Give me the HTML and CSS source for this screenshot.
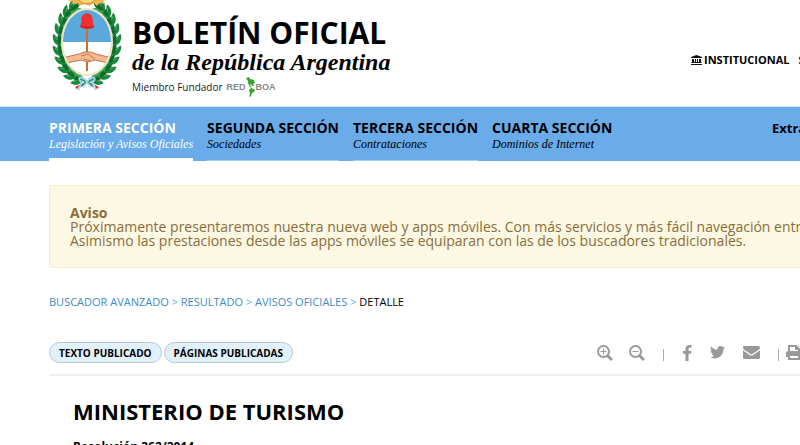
FILE: index.html
```
<!DOCTYPE html>
<html lang="es">
<head>
    <meta charset="UTF-8">
    <meta name="viewport" content="width=device-width, initial-scale=1.0">
    <title>Boletín Oficial de la República Argentina</title>
    <link rel="stylesheet" href="styles.css">
</head>
<body>
    <header class="header">
        <a href="#" class="brand">
            <svg class="escudo" viewBox="0 0 76 96" role="img" aria-label="Escudo Nacional">
                <defs>
                    <g id="hojas">
                        <path d="M0 4C-7 2-8-3-7-8C-3-6 0-2 0 4Z" fill="#16873b"/>
                        <path d="M0 4C6 2 7-3 6-8C2-6 0-2 0 4Z" fill="#38a44c"/>
                        <path d="M0 3C-4-2-3-6 0-10C3-6 3-2 0 3Z" fill="#0e6a2e"/>
                        <path d="M-2-2L-5-5M2-2L4-5" stroke="#4fae5c" stroke-width="1"/>
                    </g>
                    <g id="rama">
                        <use href="#hojas" transform="translate(-8 37) rotate(-71)"/>
                        <use href="#hojas" transform="translate(-15 33) rotate(-53)"/>
                        <use href="#hojas" transform="translate(-21 27) rotate(-38)"/>
                        <use href="#hojas" transform="translate(-25 19) rotate(-24)"/>
                        <use href="#hojas" transform="translate(-28 10) rotate(-12)"/>
                        <use href="#hojas" transform="translate(-29 0)"/>
                        <use href="#hojas" transform="translate(-28 -10) rotate(12)"/>
                        <use href="#hojas" transform="translate(-25 -19) rotate(24)"/>
                        <use href="#hojas" transform="translate(-21 -27) rotate(38)"/>
                        <use href="#hojas" transform="translate(-15 -33) rotate(53)"/>
                        <path d="M-4 38L9 45" stroke="#16873b" stroke-width="2"/>
                        <path d="M8 44L12 46" stroke="#e02a24" stroke-width="2"/>
                    </g>
                    <clipPath id="ovalo"><ellipse cx="38" cy="42" rx="24" ry="32"/></clipPath>
                </defs>
                <g transform="translate(38 42)">
                    <use href="#rama" transform="scale(.94 1)"/>
                    <use href="#rama" transform="scale(-.94 1)"/>
                </g>
                <path d="M18 0L24 2L22 4L29 3L30 6L36 4L40 6L45 3L48 6L50 3L57 4L53 1L58 0Z" fill="#f3b74f"/>
                <path d="M30 0C32 5 44 5 46 0" fill="#fbd37c" stroke="#c98a2c"/>
                <ellipse cx="38" cy="42" rx="25" ry="33" fill="#fff" stroke="#f0e2c4" stroke-width="2"/>
                <g clip-path="url(#ovalo)">
                    <path d="M13 8H63V42H13Z" fill="#5ba8dc"/>
                    <path d="M38 26V71" stroke="#c9702f" stroke-width="2"/>
                    <path d="M13 58L30 54L35 52L42 52L47 54L63 58V64L46 60L39 62L32 60L13 64Z" fill="#f3b990" stroke="#bd7850"/>
                    <path d="M32 56L39 54L46 59M35 59L41 61" stroke="#bd7850" fill="none"/>
                </g>
                <path d="M31 27C32 23 33 22 32 18C34 13 39 12 42 15C45 19 43 22 45 28C40 30 34 29 31 27Z" fill="#ef2f2d"/>
                <path d="M32 26C37 28 41 28 45 26" stroke="#b81d22" fill="none"/>
                <path d="M38 82C32 73 27 80 33 82L29 90M38 82C44 73 49 80 43 82L47 90M38 82L34 87M38 82L42 87" stroke="#a4d3f0" stroke-width="2" fill="none"/>
            </svg>
            <span class="brand-text">
                <span class="brand-title">BOLETÍN OFICIAL</span>
                <span class="brand-subtitle">de la República Argentina</span>
                <span class="brand-member">
                    Miembro Fundador
                    <span class="redboa">
                        <b>RED</b>
                        <svg class="america" viewBox="0 0 10 20" aria-hidden="true">
                            <path d="M0 1L3 0L4 2L8 3L9 6L7 7L8 9L6 9L5 7L4 8L6 11L4 10L2 6L2 4Z" fill="#35a52c"/>
                            <path d="M5 11L8 12L9 14L6 16L5 19L3 20L4 17L3 13Z" fill="#35a52c"/>
                        </svg>
                        <b>BOA</b>
                    </span>
                </span>
            </span>
        </a>
        <nav class="top-links">
            <a href="#">
                <svg class="icon-bank" viewBox="0 0 11 10" aria-hidden="true">
                    <path d="M5.500 0L11 2V3H0V2ZM1 4H3V7H4V4H5V7H6V4H7V7H8V4H10V7H10.500V8H.5V7H1ZM0 9H11V10H0Z" fill="#111"/>
                </svg>
                INSTITUCIONAL
            </a>
            <a href="#">SUSCRIPCIONES</a>
        </nav>
    </header>

    <nav class="sections">
        <a href="#" class="section active">
            <span class="section-title">PRIMERA SECCIÓN</span>
            <span class="section-desc">Legislación y Avisos Oficiales</span>
        </a>
        <a href="#" class="section">
            <span class="section-title">SEGUNDA SECCIÓN</span>
            <span class="section-desc">Sociedades</span>
        </a>
        <a href="#" class="section">
            <span class="section-title">TERCERA SECCIÓN</span>
            <span class="section-desc">Contrataciones</span>
        </a>
        <a href="#" class="section last">
            <span class="section-title">CUARTA SECCIÓN</span>
            <span class="section-desc">Dominios de Internet</span>
        </a>
        <a href="#" class="extra">Extra</a>
    </nav>

    <main class="content">
        <div class="alert">
            <strong>Aviso</strong>
            <p>Próximamente presentaremos nuestra nueva web y apps móviles. Con más servicios y más fácil navegación entre</p>
            <p>Asimismo las prestaciones desde las apps móviles se equiparan con las de los buscadores tradicionales.</p>
        </div>

        <div class="breadcrumb">
            <a href="#">BUSCADOR AVANZADO</a> <i>&gt;</i>
            <a href="#">RESULTADO</a> <i>&gt;</i>
            <a href="#">AVISOS OFICIALES</a> <i>&gt;</i>
            <span>DETALLE</span>
        </div>

        <div class="toolbar">
            <div class="views">
                <button type="button">TEXTO PUBLICADO</button>
                <button type="button">PÁGINAS PUBLICADAS</button>
            </div>
            <div class="tools">
                <div class="zoom">
                    <button type="button" aria-label="Agrandar texto">
                        <svg width="16" height="16" viewBox="0 0 16 16">
                            <circle cx="6.500" cy="6.500" r="5.500" fill="none" stroke="#999" stroke-width="2"/>
                            <path d="M10.500 10.500L15 15" stroke="#999" stroke-width="3"/>
                            <path d="M3.500 6.500H9.500M6.500 3.500V9.500" stroke="#999"/>
                        </svg>
                    </button>
                    <button type="button" aria-label="Achicar texto">
                        <svg width="16" height="16" viewBox="0 0 16 16">
                            <circle cx="6.500" cy="6.500" r="5.500" fill="none" stroke="#999" stroke-width="2"/>
                            <path d="M10.500 10.500L15 15" stroke="#999" stroke-width="3"/>
                            <path d="M3.500 6.500H9.500" stroke="#999"/>
                        </svg>
                    </button>
                </div>
                <span class="divider"></span>
                <button type="button" aria-label="Facebook">
                    <svg width="10" height="16" viewBox="0 0 9 16">
                        <path d="M9 .1V2.700H7.400C6.200 2.700 6 3.300 6 4.100V5.900H8.800L8.400 8.700H6V16H3V8.700H.5V5.900H3V3.800C3 1.400 4.500 0 6.700 0C7.800 0 8.700.1 9 .1Z" fill="#999"/>
                    </svg>
                </button>
                <button type="button" aria-label="Twitter">
                    <svg width="15" height="13" viewBox="0 0 15 13">
                        <path d="M15 1.500C14.600 2.100 14.100 2.700 13.500 3.100C13.700 8 10 12.500 4.700 12.500C3 12.500 1.400 12 0 11.100C1.600 11.300 3.200 10.800 4.500 9.800C3.200 9.800 2.100 8.900 1.700 7.700C2.100 7.800 2.600 7.800 3.100 7.600C1.600 7.300.6 6 .6 4.500C1 4.800 1.500 4.900 2 4.900C.6 3.900.2 2.100 1.100.6C2.600 2.500 4.900 3.700 7.400 3.800C6.900 1.800 8.400 0 10.400 0C11.300 0 12.100.4 12.600 1C13.300.8 14 .6 14.600.2C14.400.9 13.900 1.500 13.300 1.900C13.900 1.800 14.500 1.700 15 1.500Z" fill="#999"/>
                    </svg>
                </button>
                <button type="button" aria-label="Correo">
                    <svg width="17" height="13" viewBox="0 0 17 13">
                        <path d="M1.500 0H15.500C16.400 0 17 .6 17 1.500C17 2.500 16.200 3.500 15.400 4L10.200 7.600C9.600 8 9 8.400 8.500 8.400C8 8.400 7.400 8 6.800 7.600L1.600 4C.9 3.600 0 2.500 0 1.600C0 .7.6 0 1.500 0ZM0 4.200C1.500 5.500 4 7 6.300 8.700C7 9.200 7.700 9.600 8.500 9.600C9.300 9.600 10 9.200 10.700 8.700C13 7 15.500 5.500 17 4.200V11.500C17 12.400 16.400 13 15.500 13H1.500C.6 13 0 12.400 0 11.500Z" fill="#999"/>
                    </svg>
                </button>
                <div class="print">
                    <span class="divider"></span>
                    <button type="button" aria-label="Imprimir">
                        <svg width="16" height="15" viewBox="0 0 16 15">
                            <path d="M3 7V1H10L13 4V7M10 1V4H13" fill="none" stroke="#999" stroke-width="2"/>
                            <path d="M2 6H14C15 6 16 7 16 8V12H13V10H3V12H0V8C0 7 1 6 2 6Z" fill="#999"/>
                            <path d="M3 10H13V14H3Z" fill="#fff" stroke="#999" stroke-width="2"/>
                        </svg>
                    </button>
                </div>
            </div>
        </div>

        <article class="notice">
            <h1>MINISTERIO DE TURISMO</h1>
            <h2>Resolución 362/2014</h2>
        </article>
    </main>
</body>
</html>
```
FILE: styles.css
```
* {
    box-sizing: border-box;
}

body {
    margin: 0;
    font-family: 'Open Sans', sans-serif;
    color: #000;
    background-color: #fff;
    overflow: hidden;
}

a {
    color: inherit;
    text-decoration: none;
}

.header {
    display: flex;
    justify-content: space-between;
    height: 107px;
    padding-left: 49px;
    border-bottom: 1px solid #d9e8f5;
    overflow: hidden;
    white-space: nowrap;
}

.brand {
    display: flex;
    gap: 7px;
}

.escudo {
    width: 76px;
    height: 96px;
}

.brand-text {
    display: flex;
    flex-direction: column;
    padding-top: 13px;
}

.brand-title {
    font-size: 30px;
    font-weight: 700;
    line-height: 39px;
}

.brand-subtitle {
    font-family: 'Liberation Serif', serif;
    font-size: 24px;
    font-style: italic;
    font-weight: 700;
    line-height: 20px;
}

.brand-member {
    display: flex;
    align-items: center;
    gap: 4px;
    padding-top: 5px;
    font-size: 10px;
    line-height: 20px;
    color: #222;
}

.redboa {
    display: flex;
    align-items: center;
    font-family: 'Liberation Sans', sans-serif;
    font-size: 9px;
    color: #888;
}

.america {
    width: 10px;
    height: 20px;
}

.top-links {
    display: flex;
    align-items: flex-start;
    gap: 9px;
    width: 109px;
    padding-top: 52px;
    font-size: 11px;
    font-weight: 700;
    line-height: 16px;
}

.top-links a {
    display: flex;
    align-items: center;
    gap: 2px;
}

.icon-bank {
    width: 11px;
    height: 10px;
}

.sections {
    display: flex;
    gap: 14px;
    height: 54px;
    padding-left: 49px;
    background-color: #6aabea;
    overflow: hidden;
    white-space: nowrap;
}

.section {
    display: flex;
    flex-direction: column;
    padding-top: 13px;
    border-bottom: 1px solid #a5d0f5;
}

.section.active {
    color: #fff;
    border-bottom: 3px solid #fff;
}

.section.last {
    border-bottom: none;
}

.section-title {
    font-size: 14px;
    font-weight: 700;
    line-height: 16px;
}

.section-desc {
    font-family: 'Liberation Serif', serif;
    font-size: 12px;
    font-style: italic;
    line-height: 16px;
}

.extra {
    width: 28px;
    margin-left: auto;
    padding-top: 12px;
    font-size: 13px;
    font-weight: 700;
    line-height: 18px;
}

.content {
    padding-left: 49px;
    white-space: nowrap;
}

.alert {
    margin-top: 24px;
    padding: 20px 20px 19px;
    border: 1px solid #faebcc;
    border-right: none;
    border-radius: 4px 0 0 4px;
    background-color: #fcf8e3;
    color: #8a6d3b;
    font-size: 14px;
    line-height: 14px;
    overflow: hidden;
}

.alert p {
    margin: 0;
}

.breadcrumb {
    margin-top: 26px;
    font-size: 11px;
    line-height: 16px;
}

.breadcrumb a {
    color: #428bca;
}

.breadcrumb i {
    color: #6aabea;
    font-style: normal;
}

.toolbar {
    display: flex;
    justify-content: space-between;
    margin-top: 32px;
    padding-bottom: 11px;
    border-bottom: 2px solid #eee;
}

.views {
    display: flex;
    gap: 2px;
}

.views button {
    height: 21px;
    padding: 0 9px;
    border: 1px solid #bbc6cd;
    border-radius: 11px;
    background-color: #e1f1fb;
    color: #000;
    font-family: inherit;
    font-size: 10px;
    font-weight: 700;
    line-height: 16px;
    cursor: pointer;
}

.tools {
    display: flex;
    align-items: center;
    gap: 18px;
    width: 203px;
}

.zoom {
    display: flex;
    gap: 16px;
}

.print {
    display: flex;
    align-items: center;
    gap: 7px;
}

.tools button {
    display: flex;
    flex: none;
    padding: 0;
    border: none;
    background: none;
    cursor: pointer;
}

.divider {
    flex: none;
    width: 1px;
    height: 12px;
    margin-top: 4px;
    background-color: #aaa;
}

.notice {
    padding: 19px 24px;
}

.notice h1 {
    margin: 0;
    font-size: 22px;
    line-height: 32px;
}

.notice h2 {
    margin: 12px 0 0;
    font-size: 12px;
    line-height: 16px;
}
```
